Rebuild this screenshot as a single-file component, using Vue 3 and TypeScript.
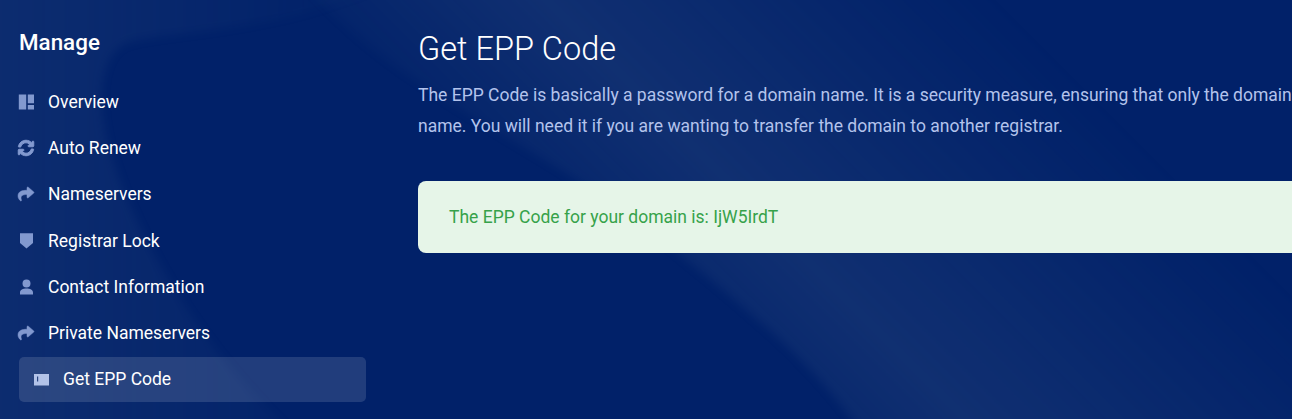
<template>
  <div class="page">
    <svg class="backdrop" width="1292" height="419" viewBox="0 0 1292 419" aria-hidden="true">
      <defs>
        <linearGradient id="band" gradientUnits="userSpaceOnUse" x1="650" y1="350" x2="1000" y2="0">
          <stop offset="0" stop-color="#5a7498" stop-opacity="0.03" />
          <stop offset="0.35" stop-color="#5a7498" stop-opacity="0.18" />
          <stop offset="1" stop-color="#5a7498" stop-opacity="0" />
        </linearGradient>
        <linearGradient id="side" gradientUnits="userSpaceOnUse" x1="0" y1="0" x2="330" y2="0">
          <stop offset="0" stop-color="#5a7498" stop-opacity="0.14" />
          <stop offset="1" stop-color="#5a7498" stop-opacity="0.02" />
        </linearGradient>
      </defs>
      <path
        class="soft"
        d="M300 -20C400 100 560 150 680 255C760 320 820 370 865 439H1320V-20Z"
        fill="url(#band)"
      />
      <path
        class="soft"
        d="M-20 -20H400C300 30 180 30 130 42C100 50 95 100 110 150C130 220 190 340 300 439H-20Z"
        fill="url(#side)"
      />
    </svg>
    <aside class="sidebar">
      <h3 class="side-title">Manage</h3>
      <ul class="menu">
        <li v-for="item in items" :key="item.label" class="menu-item" :class="{ active: item.active }">
          <svg class="icon" :class="item.weight" :viewBox="item.box || '0 0 16 16'" aria-hidden="true">
            <path :d="item.icon" fill-rule="evenodd" />
          </svg>
          <span>{{ item.label }}</span>
        </li>
      </ul>
    </aside>
    <main class="content">
      <h1 class="title">Get EPP Code</h1>
      <p class="desc">
        The EPP Code is basically a password for a domain name. It is a security measure, ensuring that only the domain
        name owner can transfer a domain name. You will need it if you are wanting to transfer the domain to another registrar.
      </p>
      <div class="alert">The EPP Code for your domain is: IjW5IrdT</div>
    </main>
  </div>
</template>

<script setup lang="ts">
interface MenuItem {
  label: string
  icon: string
  box?: string
  weight?: string
  active?: boolean
}

const share =
  'M503.691 189.836L327.687 37.851C312.281 24.546 288 35.347 288 56.015v80.053C127.371 137.907 0 170.1 0 322.326c0 61.441 39.581 122.309 83.333 154.132 13.653 9.931 33.111-2.533 28.077-18.631C66.066 312.814 132.917 274.316 288 272.085V360c0 20.7 24.3 31.453 39.687 18.164l176.004-152c11.071-9.562 11.086-26.753 0-36.328z'

const sync =
  'M370.72 133.28C339.458 104.008 298.888 87.962 255.848 88c-77.458.068-144.328 53.178-162.791 126.85-1.344 5.363-6.122 9.15-11.651 9.15H24.103c-7.498 0-13.194-6.807-11.807-14.176C33.933 94.924 134.813 8 256 8c66.448 0 126.791 26.136 171.315 68.685L463.03 40.97C478.149 25.851 504 36.559 504 57.941V192c0 13.255-10.745 24-24 24H345.941c-21.382 0-32.09-25.851-16.971-40.971l41.75-41.749zM32 296h134.059c21.382 0 32.09 25.851 16.971 40.971l-41.75 41.75c31.262 29.273 71.835 45.319 114.876 45.28 77.418-.07 144.315-53.144 162.787-126.849 1.344-5.363 6.122-9.15 11.651-9.15h57.304c7.498 0 13.194 6.807 11.807 14.176C478.067 417.076 377.187 504 256 504c-66.448 0-126.791-26.136-171.315-68.685L48.97 471.03C33.851 486.149 8 475.441 8 454.059V320c0-13.255 10.745-24 24-24z'

const items: MenuItem[] = [
  { label: 'Overview', icon: 'M.8.5h7.4v15H.8ZM9.8.5H16v8.8H9.8ZM9.8 11H16v4.5H9.8Z' },
  { label: 'Auto Renew', icon: sync, box: '0 0 512 512', weight: 'heavy' },
  { label: 'Nameservers', icon: share, box: '0 0 512 512', weight: 'bold' },
  { label: 'Registrar Lock', icon: 'M2 .2H15V10L8.5 15.6 2 10Z' },
  {
    label: 'Contact Information',
    icon: 'M8.5.5a4 4 0 1 1 0 8 4 4 0 0 1 0-8ZM2 15.5V13.5C2 11 5 9.6 8.5 9.6S15 11 15 13.5V15.5Z',
  },
  { label: 'Private Nameservers', icon: share, box: '0 0 512 512', weight: 'bold' },
  { label: 'Get EPP Code', icon: 'M1 3H16V14.4H1ZM4 5.5V10.5H5.2V5.5Z', active: true },
]
</script>

<style>
html,
body {
  margin: 0;
  overflow: hidden;
}
</style>

<style scoped>
.page {
  position: relative;
  display: flex;
  width: 1292px;
  height: 419px;
  overflow: hidden;
  font-family: Roboto, "Liberation Sans", sans-serif;
  color: #fff;
  background-color: #012169;
}

.backdrop {
  position: absolute;
  top: 0;
  left: 0;
}

.soft {
  filter: blur(5px);
}

.sidebar {
  position: relative;
  flex: 0 0 366px;
  box-sizing: border-box;
  padding: 29px 0 0 19px;
}

.side-title {
  margin: 0 0 24.5px;
  font-size: 22.4px;
  line-height: 26px;
  font-weight: 500;
}

.menu {
  list-style: none;
  margin: 0;
  padding: 0;
  display: flex;
  flex-direction: column;
  gap: 1.2px;
}

.menu-item {
  display: flex;
  align-items: center;
  gap: 14px;
  height: 45px;
  font-size: 17.5px;
  margin-left: -1px;
}

.menu-item .icon {
  width: 16px;
  height: 16px;
  fill: #8299cf;
  flex: none;
  overflow: visible;
}

.menu-item .icon.bold path {
  stroke: #8299cf;
  stroke-width: 0.5px;
  vector-effect: non-scaling-stroke;
}

.menu-item .icon.heavy path {
  stroke: #8299cf;
  stroke-width: 1px;
  vector-effect: non-scaling-stroke;
}

.menu-item.active {
  margin-left: 0;
  padding-left: 14px;
  background: rgba(255, 255, 255, 0.13);
  border-radius: 5px;
}

.menu-item.active .icon {
  fill: #b3c3e8;
}

.content {
  position: relative;
  flex: none;
  width: 1155px;
  margin-left: 52px;
  padding-top: 30px;
}

.title {
  margin: 0;
  font-size: 32.5px;
  line-height: 38px;
  font-weight: 300;
}

.desc {
  margin: 12px 0 0;
  font-size: 17.5px;
  line-height: 31px;
  color: #b3c3ec;
}

.alert {
  margin-top: 39px;
  height: 72px;
  display: flex;
  align-items: center;
  padding-left: 31px;
  border-radius: 8px;
  background: #e6f5e8;
  color: #36a24a;
  font-size: 17.5px;
}
</style>
